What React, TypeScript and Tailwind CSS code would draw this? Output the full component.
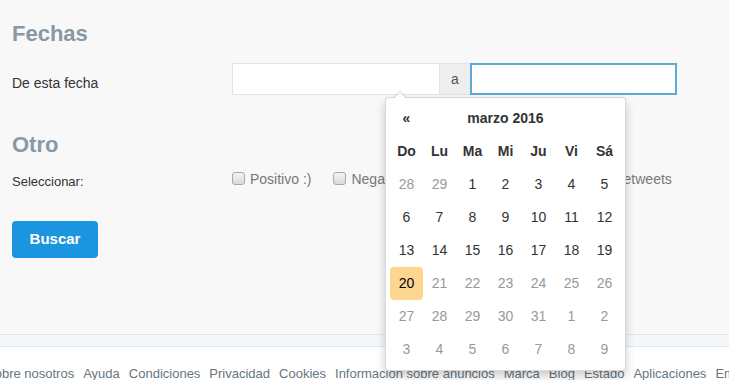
const font = { fontFamily: '"Liberation Sans", Arial, sans-serif' };

const weeks: { d: number; muted?: boolean; today?: boolean }[][] = [
  [{ d: 28, muted: true }, { d: 29, muted: true }, { d: 1 }, { d: 2 }, { d: 3 }, { d: 4 }, { d: 5 }],
  [{ d: 6 }, { d: 7 }, { d: 8 }, { d: 9 }, { d: 10 }, { d: 11 }, { d: 12 }],
  [{ d: 13 }, { d: 14 }, { d: 15 }, { d: 16 }, { d: 17 }, { d: 18 }, { d: 19 }],
  [{ d: 20, today: true }, { d: 21, muted: true }, { d: 22, muted: true }, { d: 23, muted: true }, { d: 24, muted: true }, { d: 25, muted: true }, { d: 26, muted: true }],
  [{ d: 27, muted: true }, { d: 28, muted: true }, { d: 29, muted: true }, { d: 30, muted: true }, { d: 31, muted: true }, { d: 1, muted: true }, { d: 2, muted: true }],
  [{ d: 3, muted: true }, { d: 4, muted: true }, { d: 5, muted: true }, { d: 6, muted: true }, { d: 7, muted: true }, { d: 8, muted: true }, { d: 9, muted: true }],
];

const footerLinks = [
  "Sobre nosotros",
  "Ayuda",
  "Condiciones",
  "Privacidad",
  "Cookies",
  "Información sobre anuncios",
  "Marca",
  "Blog",
  "Estado",
  "Aplicaciones",
  "Empleos",
];

function Checkbox({ label, className = "" }: { label: string; className?: string }) {
  return (
    <label className={"flex items-center gap-[5px] mt-[-3px] h-[20px] text-[14px] leading-[20px] text-[#777] whitespace-nowrap " + className}>
      <span className="mt-[-2px] w-[13px] h-[13px] rounded-[3px] border border-[#a9a9a9] bg-gradient-to-b from-[#f4f4f4] to-[#d9d9d9]" />
      {label}
    </label>
  );
}

function DatePicker() {
  return (
    <div className="absolute left-[153px] top-[34px] w-[241px] bg-white border border-black/15 rounded-[4px] shadow-[0_5px_10px_rgba(0,0,0,0.2)] p-[4px] text-[14px] text-[#333]">
      {/* caret */}
      <div className="absolute -top-[7px] left-[7px] w-0 h-0 border-l-[7px] border-r-[7px] border-b-[7px] border-l-transparent border-r-transparent border-b-black/20" />
      <div className="absolute -top-[6px] left-[8px] w-0 h-0 border-l-[6px] border-r-[6px] border-b-[6px] border-l-transparent border-r-transparent border-b-white" />

      <div className="grid grid-cols-[repeat(7,33px)]">
        <div className="h-[33px] flex items-center justify-center font-bold">«</div>
        <div className="col-span-5 h-[33px] flex items-center justify-center font-bold">marzo 2016</div>
        <div className="h-[33px]" />
        {["Do", "Lu", "Ma", "Mi", "Ju", "Vi", "Sá"].map((h) => (
          <div key={h} className="h-[33px] flex items-center justify-center font-bold">
            {h}
          </div>
        ))}
        {weeks.flat().map((c, i) => (
          <div
            key={i}
            className={
              "h-[33px] flex items-center justify-center rounded-[4px] " +
              (c.today ? "bg-[#fdd690] text-black" : c.muted ? "text-[#999]" : "text-[#333]")
            }
          >
            {c.d}
          </div>
        ))}
      </div>
    </div>
  );
}

export default function App() {
  return (
    <div className="w-[729px] h-[380px] overflow-hidden bg-white" style={font}>
      <div className="h-[334px] bg-[#f8f8f8] px-[12px] pt-[21px]">
        <h2 className="text-[22px] leading-[26px] font-bold text-[#8899a6]">Fechas</h2>

        <div className="mt-[16px] flex">
          <div className="w-[220px] mt-[10px] text-[14px] leading-[20px] text-[#333]">De esta fecha</div>
          <div className="relative flex h-[32px]">
            <div className="w-[208px] bg-white border border-[#e1e4e8]" />
            <div className="w-[30px] bg-[#eeeeee] border-y border-[#e1e4e8] flex items-center justify-center text-[14px] text-[#555]">
              a
            </div>
            <div className="w-[207px] bg-white border-2 border-[#5ea9d8]" />
            <DatePicker />
          </div>
        </div>

        <h2 className="mt-[37px] text-[22px] leading-[26px] font-bold text-[#8899a6]">Otro</h2>

        <div className="mt-[14px] flex">
          <div className="w-[220px] text-[13px] leading-[20px] text-[#333]">Seleccionar:</div>
          <div className="flex gap-[22px]">
            <Checkbox label="Positivo :)" />
            <Checkbox label="Negativo :(" />
            <Checkbox label="Pregunta ?" />
            <Checkbox label="Incluir retweets" className="ml-[10px]" />
          </div>
        </div>

        <button className="mt-[29px] w-[86px] h-[37px] rounded-[4px] bg-[#1b95e0] text-white font-bold text-[15px]">
          Buscar
        </button>
      </div>

      <div className="h-[13px] bg-[#f5f8fa] border-y border-[#e1e8ed]" />

      <div className="pt-[18px] flex gap-[9px] ml-[-14px] whitespace-nowrap text-[13px] leading-[18px] text-[#66757f]">
        {footerLinks.map((l) => (
          <span key={l}>{l}</span>
        ))}
      </div>
    </div>
  );
}
